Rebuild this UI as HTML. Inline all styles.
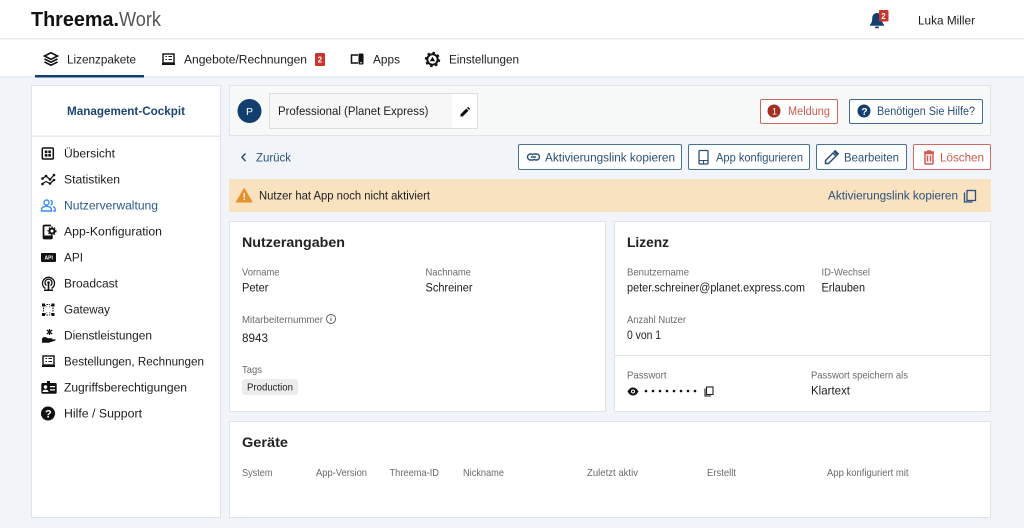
<!DOCTYPE html>
<html lang="de"><head><meta charset="utf-8"><title>Threema Work</title>
<style>
html,body{margin:0;padding:0;width:1024px;height:528px;overflow:hidden;background:#f1f5f9}
svg{display:block;filter:blur(.3px)}
text{font-family:"Liberation Sans",sans-serif;font-size:12.2px;fill:#1d1d1d}
.l{font-size:10.2px;fill:#6a6a6a}
.b{fill:#2b5079}
.h{font-size:14.2px;font-weight:bold;fill:#222}
.r{fill:#cf5a50}
</style></head><body>
<svg width="1024" height="528" viewBox="0 0 1024 528" xmlns="http://www.w3.org/2000/svg">
<rect width="1024" height="528" fill="#f1f5f9"/>
<!-- header -->
<rect width="1024" height="38" fill="#fff"/><rect y="38" width="1024" height="1.5" fill="#ececec"/>
<rect y="39.500" width="1024" height="37" fill="#fff"/><rect y="76.500" width="1024" height="1" fill="#e1e7ee"/>
<text x="31" y="26" textLength="88" lengthAdjust="spacingAndGlyphs" style="font-size:20px;font-weight:bold;fill:#111">Threema.</text>
<text x="119" y="26" textLength="42" lengthAdjust="spacingAndGlyphs" style="font-size:20px;fill:#555">Work</text>
<!-- bell -->
<path d="M877 13c-3.300 0-4.800 2.500-4.800 5.500 0 3-1 5-2.200 6.200v1h14v-1c-1.200-1.200-2.200-3.200-2.200-6.200 0-3-1.500-5.500-4.800-5.500z" fill="#123f70"/><rect x="875" y="26.500" width="4" height="1.800" rx=".9" fill="#123f70"/>
<rect x="879" y="10" width="9.500" height="11.500" rx="1" fill="#c9362f"/><text x="881.300" y="18.800" style="font-size:8px;font-weight:bold;fill:#fff">2</text>
<text x="918" y="24.500" textLength="57" lengthAdjust="spacingAndGlyphs">Luka Miller</text>
<!-- tabs -->
<path d="M51 52.800l6.500 3.200-6.500 3.300-6.500-3.300z" fill="none" stroke="#111" stroke-width="1.600"/><path d="M44.500 59l6.500 3.200 6.500-3.200M44.500 62l6.500 3.200 6.500-3.200" fill="none" stroke="#111" stroke-width="1.600"/>
<text x="67" y="63.500" textLength="69" lengthAdjust="spacingAndGlyphs">Lizenzpakete</text>
<rect x="35" y="75" width="109" height="2.500" fill="#123f70"/>
<rect x="163" y="54" width="11" height="9" fill="none" stroke="#111" stroke-width="1.400"/><rect x="162" y="63" width="13" height="2" fill="#111"/><path d="M165.500 56.500h1.500M165.500 59.500h1.500M168.500 56.500h3.500M168.500 59.500h3.500" stroke="#111" stroke-width="1.100"/>
<text x="184" y="63.500" textLength="123" lengthAdjust="spacingAndGlyphs">Angebote/Rechnungen</text>
<rect x="315" y="53" width="10" height="13" rx="1" fill="#c9362f"/><text x="317.600" y="62.500" style="font-size:8px;font-weight:bold;fill:#fff">2</text>
<path d="M358 55h-6.500v8H358" fill="none" stroke="#111" stroke-width="1.500"/><rect x="358.500" y="53.500" width="5" height="11" rx="1" fill="#111"/><rect x="360.300" y="62" width="1.400" height="1.400" fill="#fff"/>
<text x="373" y="63.500" textLength="27" lengthAdjust="spacingAndGlyphs">Apps</text>
<circle cx="432.500" cy="59.500" r="5.200" fill="none" stroke="#111" stroke-width="2"/><circle cx="432.500" cy="59.500" r="6.800" fill="none" stroke="#111" stroke-width="1.800" stroke-dasharray="2.500 2.800"/><path d="M432.500 56.800l-2.600 4.400h5.200z" fill="#111"/>
<text x="449" y="63.500" textLength="70" lengthAdjust="spacingAndGlyphs">Einstellungen</text>
<!-- sidebar -->
<rect x="31.500" y="85.500" width="189" height="432" fill="#fff" stroke="#dfe3e7"/>
<rect x="32" y="135.500" width="188" height="1.500" fill="#e9e9e9"/>
<text x="67" y="115" textLength="118" lengthAdjust="spacingAndGlyphs" style="font-weight:bold;font-size:12.200px;fill:#1c4671">Management-Cockpit</text>
<!-- Uebersicht -->
<rect x="42.300" y="148" width="11" height="11" rx="1" fill="none" stroke="#111" stroke-width="1.500"/><rect x="44.800" y="150.500" width="2.600" height="2.600" fill="#111"/><rect x="48.300" y="150.500" width="2.600" height="2.600" fill="#111"/><rect x="44.800" y="154" width="2.600" height="2.600" fill="#111"/><rect x="48.300" y="154" width="2.600" height="2.600" fill="#111"/>
<text x="64" y="157.500" textLength="51" lengthAdjust="spacingAndGlyphs">Übersicht</text>
<!-- Statistiken -->
<path d="M42 179l4-3 4 3.500 4.500-5M42 184l4-2.500 4 2 4.500-4" fill="none" stroke="#111" stroke-width="1.200"/><g fill="#111"><circle cx="42.500" cy="178.500" r="1.300"/><circle cx="46" cy="176" r="1.300"/><circle cx="50" cy="179.500" r="1.300"/><circle cx="54" cy="175" r="1.300"/><circle cx="42.500" cy="184" r="1.300"/><circle cx="50" cy="183.500" r="1.300"/><circle cx="54" cy="180" r="1.300"/></g>
<text x="64" y="183.500" textLength="56" lengthAdjust="spacingAndGlyphs">Statistiken</text>
<!-- Nutzer -->
<g fill="none" stroke="#3f8fe6" stroke-width="1.400"><circle cx="46.500" cy="202.500" r="2.500"/><path d="M41.500 211v-1.500c0-2 2.500-3.200 5-3.200s5 1.200 5 3.200v1.500z"/><path d="M50.500 200.200a2.500 2.500 0 0 1 0 4.800M53 206.500c1.300.6 2.200 1.600 2.200 3v1.500h-2"/></g>
<text x="64" y="209.500" textLength="94" lengthAdjust="spacingAndGlyphs" style="fill:#2b5a8f">Nutzerverwaltung</text>
<!-- App-Konfig -->
<path d="M51 225.500h-6.500a1 1 0 0 0-1 1v11a1 1 0 0 0 1 1H51a1 1 0 0 0 1-1v-2" fill="none" stroke="#111" stroke-width="1.700"/><rect x="44" y="235.500" width="8" height="3" fill="#111"/><circle cx="52" cy="231" r="2.500" fill="none" stroke="#111" stroke-width="2"/><circle cx="52" cy="231" r="4" fill="none" stroke="#111" stroke-width="1" stroke-dasharray="1.500 1.500"/>
<text x="64" y="235.500" textLength="98" lengthAdjust="spacingAndGlyphs">App-Konfiguration</text>
<!-- API -->
<rect x="41" y="253" width="15" height="9" rx="1" fill="#111"/><text x="44.500" y="259.500" style="font-size:5px;font-weight:bold;fill:#fff">API</text>
<text x="64" y="261.500" textLength="19" lengthAdjust="spacingAndGlyphs">API</text>
<!-- Broadcast -->
<g fill="none" stroke="#111" stroke-width="1.300"><path d="M45.500 288.500a6 6 0 1 1 6 0"/><path d="M46.500 285.500a3.500 3.500 0 1 1 4 0"/></g><circle cx="48.500" cy="282.500" r="1.300" fill="#111"/><rect x="47.700" y="283" width="1.600" height="6.500" fill="#111"/><rect x="44" y="289.500" width="9" height="1.500" fill="#111"/>
<text x="64" y="287.500" textLength="54" lengthAdjust="spacingAndGlyphs">Broadcast</text>
<!-- Gateway -->
<g fill="#111"><rect x="42" y="303.500" width="3" height="3"/><rect x="51.500" y="303.500" width="3" height="3"/><rect x="42" y="313" width="3" height="3"/><rect x="51.500" y="313" width="3" height="3"/></g><path d="M44.500 305l2.500 2M52 305l-2.500 2M44.500 314.500l2.500-2M52 314.500l-2.500-2M43.500 307.500v4M53 307.500v4M46.500 304.500h3.500M46.500 315h3.500" stroke="#111" stroke-width="1.100" stroke-dasharray="1.600 1"/>
<text x="64" y="313.500" textLength="46" lengthAdjust="spacingAndGlyphs">Gateway</text>
<!-- Dienstleistungen -->
<path d="M49.500 329v6M46.800 330l5.400 4M52.200 330l-5.400 4" stroke="#111" stroke-width="1.300"/><path d="M42 339.500c0-1.700 1.500-2.500 3-2.500l3.500 1.200h3.300c.8 0 1 1.500 0 1.500h-2l5-.5c1 0 1 1.200 0 1.500l-6 2h-6.800z" fill="#111"/>
<text x="64" y="339.500" textLength="88" lengthAdjust="spacingAndGlyphs">Dienstleistungen</text>
<!-- Bestellungen -->
<rect x="43" y="356" width="11" height="9" fill="none" stroke="#111" stroke-width="1.400"/><rect x="42" y="365" width="13" height="2" fill="#111"/><path d="M45.500 358.500h1.500M45.500 361.500h1.500M48.500 358.500h3.500M48.500 361.500h3.500" stroke="#111" stroke-width="1.100"/>
<text x="64" y="365.500" textLength="140" lengthAdjust="spacingAndGlyphs">Bestellungen, Rechnungen</text>
<!-- Zugriff -->
<path d="M42.500 383h4.500v-2h3v2h5.500a1.200 1.200 0 0 1 1.200 1.200v8.300a1.200 1.200 0 0 1-1.200 1.200h-13a1.200 1.200 0 0 1-1.200-1.200v-8.300a1.200 1.200 0 0 1 1.200-1.200z" fill="#111"/><circle cx="45.500" cy="387" r="1.700" fill="#fff"/><path d="M42.500 392c0-1.500 1.400-2.200 3-2.200s3 .7 3 2.200zM50 386h5v1.300h-5zM50 389.200h5v1.300h-5z" fill="#fff"/>
<text x="64" y="391.500" textLength="123" lengthAdjust="spacingAndGlyphs">Zugriffsberechtigungen</text>
<!-- Hilfe -->
<circle cx="48" cy="413.500" r="7" fill="#111"/><text x="45" y="417.500" style="font-size:11px;font-weight:bold;fill:#fff">?</text>
<text x="64" y="417.500" textLength="78" lengthAdjust="spacingAndGlyphs">Hilfe / Support</text>
<!-- top panel -->
<rect x="229.500" y="85.500" width="761" height="50" fill="#f7f8f8" stroke="#e0e5ea"/>
<circle cx="249.500" cy="111" r="12" fill="#123f70"/><text x="246" y="114.800" style="font-size:10.500px;fill:#fff">P</text>
<rect x="269.500" y="93.500" width="208" height="35" fill="#f7f7f7" stroke="#dedede"/><rect x="452" y="94" width="25" height="34" fill="#fff"/>
<text x="278" y="115" textLength="150.500" lengthAdjust="spacingAndGlyphs">Professional (Planet Express)</text>
<path d="M460.500 114.300l5.800-5.800 2.200 2.200-5.800 5.800h-2.200zM467 107.800l1-1 2.200 2.200-1 1z" fill="#111"/>
<rect x="760.500" y="99.500" width="77" height="24" rx="1.500" fill="#fff" stroke="#c9665e"/>
<circle cx="774" cy="111" r="6.500" fill="#a52d22"/><text x="772" y="114.500" style="font-size:9px;fill:#fff">1</text>
<text class="r" x="788" y="115" textLength="42" lengthAdjust="spacingAndGlyphs">Meldung</text>
<rect x="849.500" y="99.500" width="133" height="24" rx="1.500" fill="#fff" stroke="#3f6a96"/>
<circle cx="864" cy="111" r="6.500" fill="#123f70"/><text x="861.200" y="115" style="font-size:10.500px;font-weight:bold;fill:#fff">?</text>
<text class="b" x="877" y="115" textLength="98" lengthAdjust="spacingAndGlyphs">Benötigen Sie Hilfe?</text>
<!-- action row -->
<path d="M245.500 153.500l-3.500 3.800 3.500 3.800" fill="none" stroke="#2b5079" stroke-width="1.500"/>
<text class="b" x="256" y="161.500" textLength="35" lengthAdjust="spacingAndGlyphs">Zurück</text>
<rect x="518.500" y="144.500" width="163" height="25" rx="1.500" fill="#fff" stroke="#4a7198"/>
<path d="M532 154h-1.500a3 3 0 0 0 0 6h2.500a3 3 0 0 0 2-1M535 160h1.500a3 3 0 0 0 0-6H534a3 3 0 0 0-2 1M531 157h5" fill="none" stroke="#2b5079" stroke-width="1.400"/>
<text class="b" x="545" y="161.500" textLength="130" lengthAdjust="spacingAndGlyphs">Aktivierungslink kopieren</text>
<rect x="688.500" y="144.500" width="121" height="25" rx="1.500" fill="#fff" stroke="#4a7198"/>
<rect x="699" y="150.500" width="9" height="13.500" rx="1" fill="none" stroke="#2b5079" stroke-width="1.300"/><path d="M699 160.500h9M703.500 160.500v3.500" stroke="#2b5079" stroke-width="1.100"/>
<text class="b" x="716" y="161.500" textLength="87" lengthAdjust="spacingAndGlyphs">App konfigurieren</text>
<rect x="816.500" y="144.500" width="90" height="25" rx="1.500" fill="#fff" stroke="#4a7198"/>
<path d="M825.500 163.500v-3l7.500-7.500 3 3-7.500 7.500zM834.200 151.800l1-1 3 3-1 1z" fill="none" stroke="#2b5079" stroke-width="1.500"/>
<text class="b" x="844" y="161.500" textLength="55" lengthAdjust="spacingAndGlyphs">Bearbeiten</text>
<rect x="913.500" y="144.500" width="77" height="25" rx="1.500" fill="#fff" stroke="#cf6a62"/>
<path d="M925 153.500h8v9.500a1 1 0 0 1-1 1h-6a1 1 0 0 1-1-1zM924 152h10M927 151h4M927.500 155.500v6M930.500 155.500v6" fill="none" stroke="#cf5a50" stroke-width="1.500"/>
<text class="r" x="940" y="161.500" textLength="44" lengthAdjust="spacingAndGlyphs">Löschen</text>
<!-- alert -->
<rect x="229" y="179" width="762" height="33" fill="#f9e2c0"/>
<path d="M244.200 188.500l7.800 13.500h-15.600z" fill="#e7902f" stroke="#e7902f" stroke-width="1" stroke-linejoin="round"/><rect x="243.600" y="193" width="1.300" height="4.500" fill="#fff"/><rect x="243.600" y="198.500" width="1.300" height="1.400" fill="#fff"/>
<text x="259" y="199.500" textLength="171" lengthAdjust="spacingAndGlyphs">Nutzer hat App noch nicht aktiviert</text>
<text class="b" x="828" y="199.500" textLength="130" lengthAdjust="spacingAndGlyphs">Aktivierungslink kopieren</text>
<rect x="967" y="190.500" width="8.500" height="10" fill="none" stroke="#2b5079" stroke-width="1.300"/><path d="M964.500 192.500v9.500h8" fill="none" stroke="#2b5079" stroke-width="1.300"/>
<!-- card 1 -->
<rect x="229.500" y="221.500" width="376" height="190" fill="#fff" stroke="#dfe3e7"/>
<text class="h" x="242" y="247" textLength="103" lengthAdjust="spacingAndGlyphs">Nutzerangaben</text>
<text class="l" x="242" y="275.500" textLength="37.500" lengthAdjust="spacingAndGlyphs">Vorname</text>
<text class="l" x="425.500" y="275.500" textLength="45.500" lengthAdjust="spacingAndGlyphs">Nachname</text>
<text x="242" y="291.500" textLength="26.500" lengthAdjust="spacingAndGlyphs">Peter</text>
<text x="425.500" y="291.500" textLength="47" lengthAdjust="spacingAndGlyphs">Schreiner</text>
<text class="l" x="242" y="323" textLength="81" lengthAdjust="spacingAndGlyphs">Mitarbeiternummer</text>
<circle cx="331" cy="319" r="4.500" fill="none" stroke="#555" stroke-width=".9"/><path d="M331 318v3M331 316.300v1" stroke="#555" stroke-width=".9"/>
<text x="242" y="342" textLength="26" lengthAdjust="spacingAndGlyphs">8943</text>
<text class="l" x="242" y="373" textLength="20" lengthAdjust="spacingAndGlyphs">Tags</text>
<rect x="242" y="379" width="56" height="16" rx="3" fill="#ececec"/>
<text x="247" y="390.500" textLength="46" lengthAdjust="spacingAndGlyphs" style="font-size:10.200px">Production</text>
<!-- card 2 -->
<rect x="614.500" y="221.500" width="376" height="190" fill="#fff" stroke="#dfe3e7"/>
<rect x="615" y="355" width="375" height="1" fill="#dfe3e7"/>
<text class="h" x="627" y="247" textLength="42" lengthAdjust="spacingAndGlyphs">Lizenz</text>
<text class="l" x="627" y="275.500" textLength="62" lengthAdjust="spacingAndGlyphs">Benutzername</text>
<text class="l" x="821.500" y="275.500" textLength="48.500" lengthAdjust="spacingAndGlyphs">ID-Wechsel</text>
<text x="627" y="291.500" textLength="178" lengthAdjust="spacingAndGlyphs">peter.schreiner@planet.express.com</text>
<text x="821.500" y="291.500" textLength="43.500" lengthAdjust="spacingAndGlyphs">Erlauben</text>
<text class="l" x="627" y="323" textLength="59" lengthAdjust="spacingAndGlyphs">Anzahl Nutzer</text>
<text x="627" y="339" textLength="34" lengthAdjust="spacingAndGlyphs">0 von 1</text>
<text class="l" x="627" y="378.500" textLength="39.500" lengthAdjust="spacingAndGlyphs">Passwort</text>
<text class="l" x="811" y="378.500" textLength="97" lengthAdjust="spacingAndGlyphs">Passwort speichern als</text>
<path d="M627.500 391.500c1.500-2.800 3.500-4 5.500-4s4 1.200 5.500 4c-1.500 2.800-3.500 4-5.500 4s-4-1.200-5.500-4z" fill="#111"/><circle cx="633" cy="391.500" r="2" fill="#fff"/><circle cx="633" cy="391.500" r="1" fill="#111"/>
<g fill="#111"><circle cx="646" cy="391" r="1.300"/><circle cx="653" cy="391" r="1.300"/><circle cx="660" cy="391" r="1.300"/><circle cx="667" cy="391" r="1.300"/><circle cx="674" cy="391" r="1.300"/><circle cx="681" cy="391" r="1.300"/><circle cx="688" cy="391" r="1.300"/><circle cx="695" cy="391" r="1.300"/></g>
<rect x="706.500" y="387" width="6.500" height="7.500" fill="none" stroke="#222" stroke-width="1.100"/><path d="M705 388.500v7.500h6" fill="none" stroke="#222" stroke-width="1.100"/>
<text x="811" y="394.500" textLength="39" lengthAdjust="spacingAndGlyphs">Klartext</text>
<!-- card 3 -->
<rect x="229.500" y="421.500" width="761" height="96" fill="#fff" stroke="#dfe3e7"/>
<text class="h" x="242" y="447" textLength="46" lengthAdjust="spacingAndGlyphs">Geräte</text>
<text class="l" x="242" y="476" textLength="30.500" lengthAdjust="spacingAndGlyphs">System</text>
<text class="l" x="316" y="476" textLength="51" lengthAdjust="spacingAndGlyphs">App-Version</text>
<text class="l" x="389.500" y="476" textLength="49.500" lengthAdjust="spacingAndGlyphs">Threema-ID</text>
<text class="l" x="463" y="476" textLength="41" lengthAdjust="spacingAndGlyphs">Nickname</text>
<text class="l" x="587" y="476" textLength="51" lengthAdjust="spacingAndGlyphs">Zuletzt aktiv</text>
<text class="l" x="707" y="476" textLength="29" lengthAdjust="spacingAndGlyphs">Erstellt</text>
<text class="l" x="827" y="476" textLength="81.500" lengthAdjust="spacingAndGlyphs">App konfiguriert mit</text>
</svg>
</body></html>
